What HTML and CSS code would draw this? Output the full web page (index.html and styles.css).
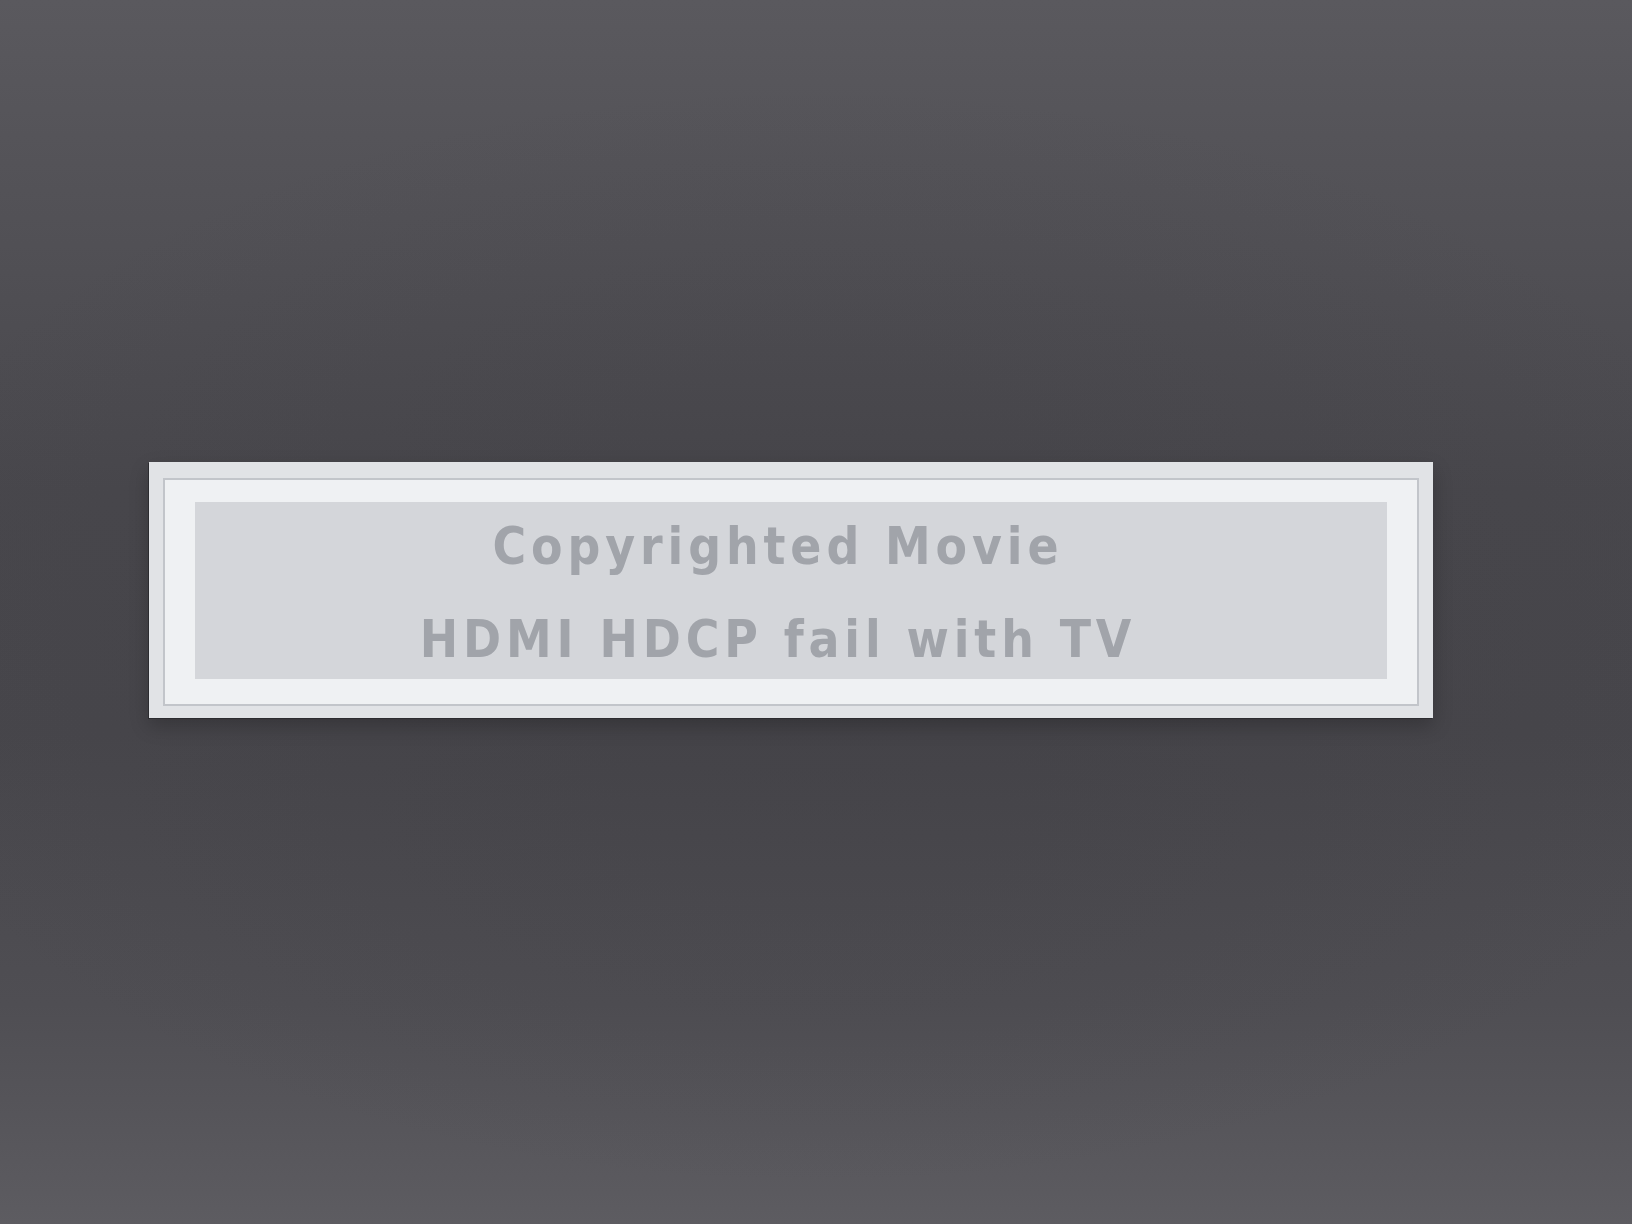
FILE: index.html
```html
<!DOCTYPE html>
<html lang="en">
<head>
    <meta charset="UTF-8">
    <title>HDCP Notice</title>
    <link rel="stylesheet" href="styles.css">
</head>
<body>
    <div class="screen">
        <div class="notice">
            <div class="notice-frame">
                <div class="notice-panel">
                    <div class="notice-line">Copyrighted Movie</div>
                    <div class="notice-line">HDMI HDCP fail with TV</div>
                </div>
            </div>
        </div>
    </div>
</body>
</html>
```

FILE: styles.css
```css
html,
body {
    margin: 0;
    padding: 0;
}
body {
    width: 1632px;
    height: 1224px;
    overflow: hidden;
    background:
        radial-gradient(ellipse 60% 45% at 50% 52%, rgba(60, 59, 64, 0.35), rgba(60, 59, 64, 0) 100%),
        linear-gradient(to bottom, #5a595e 0%, #515055 20%, #48474c 40%, #47464b 60%, #4f4e53 82%, #5d5c61 100%);
}
.screen {
    padding: 462px 0 0 149px;
}
.notice {
    width: 1284px;
    box-sizing: border-box;
    padding: 16px 14px 12px 14px;
    background: #e1e3e6;
    box-shadow: -1px 1px 0 #2c2c30, 0 8px 18px rgba(0, 0, 0, 0.22);
}
.notice-frame {
    border: 2px solid #c2c5ca;
    background: #eff1f3;
    padding: 22px 30px 25px 30px;
}
.notice-panel {
    height: 177px;
    box-sizing: border-box;
    padding: 19px 26px 14px 0;
    background: #d4d6da;
    display: flex;
    flex-direction: column;
    align-items: center;
    gap: 42px;
}
.notice-line {
    font-family: "DejaVu Sans Condensed", "DejaVu Sans", sans-serif;
    font-stretch: condensed;
    font-weight: bold;
    font-size: 51px;
    line-height: 51px;
    letter-spacing: 4.9px;
    color: #a1a4aa;
    white-space: nowrap;
}
```
